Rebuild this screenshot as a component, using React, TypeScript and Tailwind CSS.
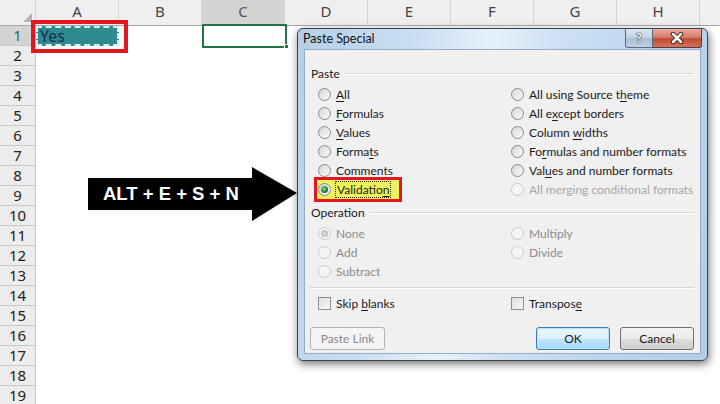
import type { ReactNode } from 'react'

const COLS = ['A', 'B', 'C', 'D', 'E', 'F', 'G', 'H', '']
const ROWS = Array.from({ length: 19 }, (_, i) => i + 1)

// underline the access key letter like a Windows dialog does
function Accel({ text, at }: { text: string; at?: number }) {
  if (at === undefined) return <>{text}</>
  return (
    <>
      {text.slice(0, at)}
      <span className="underline underline-offset-[2px]">{text[at]}</span>
      {text.slice(at + 1)}
    </>
  )
}

function Radio({ checked, disabled }: { checked?: boolean; disabled?: boolean }) {
  return (
    <span
      className={`w-[13px] h-[13px] rounded-full border flex items-center justify-center shrink-0 ${
        disabled
          ? 'border-[#c9c9c9] bg-[#f5f5f5]'
          : 'border-[#8a8a8a] bg-[linear-gradient(135deg,#d6d6d6,#fbfbfb)]'
      }`}
    >
      {checked && (
        <span
          className={`w-[7px] h-[7px] rounded-full ${
            disabled
              ? 'bg-[radial-gradient(circle,#e0e0e0_0%,#a9a9a9_100%)]'
              : 'bg-[radial-gradient(circle_at_40%_40%,#8fe09a_0%,#2a8a46_50%,#0f4d25_100%)]'
          }`}
        />
      )}
    </span>
  )
}

function Checkbox() {
  return (
    <span className="w-[13px] h-[13px] border border-[#8e8f8f] bg-[linear-gradient(135deg,#dcdcdc,#fbfbfb)] shrink-0" />
  )
}

function Option({
  label,
  at,
  checked,
  disabled,
  faint,
}: {
  label: string
  at?: number
  checked?: boolean
  disabled?: boolean
  faint?: boolean
}) {
  const color = faint ? 'text-[#a6a6a6]' : disabled ? 'text-[#8c8c8c]' : 'text-[#1a1a1a]'
  return (
    <div className="h-[19px] flex items-center gap-[5px]">
      <Radio checked={checked} disabled={disabled || faint} />
      <span className={`whitespace-nowrap pt-[1px] ${color}`}>
        <Accel text={label} at={at} />
      </span>
    </div>
  )
}

function GroupHeader({ children }: { children: ReactNode }) {
  return (
    <div className="h-[18px] flex items-center gap-[4px]">
      <span className="ml-[1px] pt-[1px] text-[#1a1a1a]">{children}</span>
      <span className="flex-1 border-t border-[#d5d5d5] shadow-[0_1px_0_#fff]" />
    </div>
  )
}

function Button({
  children,
  disabled,
  primary,
  w,
}: {
  children: ReactNode
  disabled?: boolean
  primary?: boolean
  w: string
}) {
  return (
    <div
      className={`${w} h-[23px] rounded-[3px] border flex items-center justify-center pt-[1px] ${
        disabled
          ? 'border-[#adb2b5] bg-[#f4f4f4] text-[#8a8a8a]'
          : primary
            ? 'border-[#3c7fb1] bg-[linear-gradient(#eaf6fd_0%,#d9f0fc_50%,#bee6fd_51%,#a7d9f5_100%)] text-[#1a1a1a] shadow-[inset_0_0_0_1px_#b9e2f8]'
            : 'border-[#707070] bg-[linear-gradient(#f2f2f2_0%,#ebebeb_50%,#dddddd_51%,#cfcfcf_100%)] text-[#1a1a1a]'
      }`}
    >
      {children}
    </div>
  )
}

function Sheet() {
  return (
    <div className="flex flex-col font-['Noto_Sans',sans-serif] text-[15px]">
      {/* column headers */}
      <div className="flex h-[26px] bg-[#efefef] border-b border-[#a9a9a9]">
        <div className="w-[36px] shrink-0 border-r border-[#d0d0d0] flex items-end justify-end p-[3px]">
          <svg width="9" height="9" viewBox="0 0 9 9">
            <polygon points="9,0 9,9 0,9" fill="#b5b5b5" />
          </svg>
        </div>
        {COLS.map((c, i) => (
          <div
            key={i}
            className={`w-[83px] shrink-0 border-r border-[#d4d4d4] flex items-center justify-center leading-none pb-[2px] ${
              c === 'C' ? 'bg-[#d3d3d3] text-[#555]' : 'text-[#444]'
            }`}
          >
            {c}
          </div>
        ))}
      </div>
      {ROWS.map((r) => (
        <div key={r} className="flex h-[20px]">
          <div
            className={`w-[36px] shrink-0 border-r border-b border-[#c8c8c8] flex items-center justify-center leading-none ${
              r === 1 ? 'bg-[#d3d3d3] text-[#217346]' : 'bg-[#ececec] text-[#222]'
            }`}
          >
            {r}
          </div>
          {COLS.map((c, i) =>
            r === 1 && c === 'A' ? (
              <div
                key={i}
                className="w-[83px] shrink-0 bg-[#2f8a90] border-2 border-dashed border-[#d8efe9] flex items-center pl-[2px] text-[16px] text-[#16304f] leading-none"
              >
                Yes
              </div>
            ) : (
              <div key={i} className="w-[83px] shrink-0 bg-white" />
            ),
          )}
        </div>
      ))}
    </div>
  )
}

function PasteSpecial() {
  return (
    <div className="absolute left-[297px] top-[28px] w-[411px] h-[333px] rounded-[6px] border border-[#3a4450] shadow-[1px_3px_9px_rgba(0,0,0,0.55)] bg-[linear-gradient(100deg,#b6cfe8_0%,#c9def2_25%,#e6f1fb_42%,#cfe2f4_55%,#bdd5ed_75%,#b4cde7_100%)] flex flex-col font-['Lato',sans-serif] text-[12px]">
      {/* title bar */}
      <div className="h-[20px] flex">
        <span className="pl-[5px] self-center text-[12.5px] text-[#111]">Paste Special</span>
        <div className="ml-auto mr-[5px] flex h-[19px]">
          <div className="w-[28px] rounded-bl-[3px] border border-t-0 border-[#5a6b7d] bg-[linear-gradient(#dbe6f1_0%,#c2d2e2_50%,#a9bdd1_51%,#bfd0e0_100%)] flex items-center justify-center">
            <span className="font-bold text-[13px] leading-none text-white [text-shadow:0_0_1px_#1e2a38,0_0_1px_#1e2a38,0_0_1px_#1e2a38]">
              ?
            </span>
          </div>
          <div className="w-[49px] rounded-br-[3px] border border-l-0 border-t-0 border-[#5a3a3a] bg-[linear-gradient(#e9a99b_0%,#d47f6e_45%,#c24a35_55%,#d2735f_100%)] flex items-center justify-center">
            <svg width="14" height="12" viewBox="0 0 14 12">
              <path d="M3 2 L11 10 M11 2 L3 10" stroke="#3b1e1a" strokeWidth="4.5" strokeLinecap="round" />
              <path d="M3 2 L11 10 M11 2 L3 10" stroke="#fff" strokeWidth="2.5" strokeLinecap="round" />
            </svg>
          </div>
        </div>
      </div>

      {/* client area */}
      <div className="mx-[6px] mb-[6px] flex-1 border border-[#93abc4] bg-[#f0f0f0] pl-[5px] pr-[6px] pt-[14px] flex flex-col">
        <GroupHeader>Paste</GroupHeader>
        <div className="mt-[3px] ml-[8px] grid grid-cols-[193px_1fr]">
          <div className="flex flex-col">
            <Option label="All" at={0} />
            <Option label="Formulas" at={0} />
            <Option label="Values" at={0} />
            <Option label="Formats" at={5} />
            <Option label="Comments" at={0} />
            <div className="h-[19px] flex items-center">
              <div className="-ml-[4px] h-[25px] border-[3px] border-[#e3161f] bg-[#eef25b] pl-[1px] pr-[8px] flex items-center gap-[4px]">
                <Radio checked />
                <span className="border border-dotted border-[#222] px-[1px] pt-[1px] leading-[14px] text-[#1a1a1a]">
                  <Accel text="Validation" at={9} />
                </span>
              </div>
            </div>
          </div>
          <div className="flex flex-col">
            <Option label="All using Source theme" at={18} />
            <Option label="All except borders" at={5} />
            <Option label="Column widths" at={7} />
            <Option label="Formulas and number formats" at={2} />
            <Option label="Values and number formats" at={3} />
            <Option label="All merging conditional formats" faint />
          </div>
        </div>

        <div className="mt-[4px]">
          <GroupHeader>Operation</GroupHeader>
        </div>
        <div className="mt-[3px] ml-[8px] grid grid-cols-[193px_1fr]">
          <div className="flex flex-col">
            <Option label="None" checked disabled />
            <Option label="Add" disabled />
            <Option label="Subtract" disabled />
          </div>
          <div className="flex flex-col">
            <Option label="Multiply" disabled />
            <Option label="Divide" disabled />
          </div>
        </div>

        <div className="mt-[6px] border-t border-[#d5d5d5] shadow-[0_1px_0_#fff]" />

        <div className="mt-[6px] ml-[8px] grid grid-cols-[193px_1fr]">
          <div className="h-[19px] flex items-center gap-[5px] text-[#1a1a1a]">
            <Checkbox />
            <span className="pt-[1px]">
              <Accel text="Skip blanks" at={5} />
            </span>
          </div>
          <div className="h-[19px] flex items-center gap-[5px] text-[#1a1a1a]">
            <Checkbox />
            <span className="pt-[1px]">
              <Accel text="Transpose" at={8} />
            </span>
          </div>
        </div>

        <div className="mt-[14px] flex items-center">
          <Button w="w-[75px]" disabled>
            Paste Link
          </Button>
          <div className="ml-auto flex gap-[10px]">
            <Button w="w-[74px]" primary>
              OK
            </Button>
            <Button w="w-[74px]">Cancel</Button>
          </div>
        </div>
      </div>
    </div>
  )
}

export default function App() {
  return (
    <div className="relative w-[720px] h-[404px] overflow-hidden bg-white">
      <Sheet />

      {/* copy source highlight on A1 */}
      <div className="absolute left-[31px] top-[20px] w-[97px] h-[33px] border-[4px] border-[#e3161f]" />

      {/* active cell C1 */}
      <div className="absolute left-[202px] top-[24px] w-[85px] h-[24px] border-2 border-[#217346]" />
      <div className="absolute left-[284px] top-[44px] w-[5px] h-[5px] bg-[#217346] border border-white" />

      {/* keyboard shortcut arrow */}
      <div className="absolute left-[88px] top-[166px] w-[210px] h-[56px]">
        <svg width="210" height="56" viewBox="0 0 210 56" className="block">
          <polygon points="0,12 164,12 164,1 209,27 164,55 164,44 0,44" fill="#000" />
        </svg>
        <span className="absolute left-[15px] top-[12px] h-[32px] flex items-center font-['Liberation_Sans',Arial,sans-serif] font-bold text-[18.5px] text-white leading-none whitespace-nowrap">
          ALT + E + S + N
        </span>
      </div>

      <PasteSpecial />
    </div>
  )
}
